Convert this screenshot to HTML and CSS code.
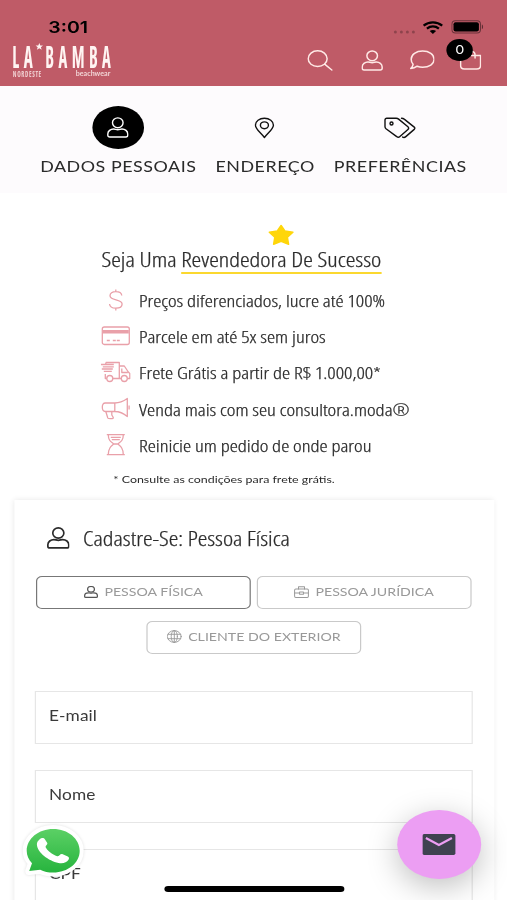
FILE: index.html
```html
<!DOCTYPE html>
<html lang="pt-BR">
<head>
<meta charset="utf-8">
<title>La Bamba Nordeste - Cadastro</title>
<link rel="stylesheet" href="styles.css">
</head>
<body>
<svg class="defs" aria-hidden="true">
  <symbol id="user" viewBox="0 0 22 21" preserveAspectRatio="none">
    <ellipse cx="11" cy="5.8" rx="5.3" ry="4.9"/>
    <path d="M1 18.3V17c0-3 2.800-5 5.800-5 1.600 0 2.300.7 4.200.7s2.600-.7 4.200-.7c3 0 5.800 2 5.800 5v1.300c0 .9-.8 1.700-1.900 1.700H2.900C1.800 20 1 19.200 1 18.300z"/>
  </symbol>
</svg>
<div class="screen">
  <header class="header">
    <div class="status">
      <span class="time">3:01</span>
      <svg class="dots" viewBox="0 0 24 4" preserveAspectRatio="none"><circle cx="3" cy="2" r="1.500"/><circle cx="9" cy="2" r="1.500"/><circle cx="15" cy="2" r="1.500"/><circle cx="21" cy="2" r="1.500"/></svg>
      <svg class="wifi" viewBox="0 0 21 13" preserveAspectRatio="none"><path d="M1.200 4.600C6.500.2 14.500.2 19.800 4.600M4.500 7.600c3.600-2.800 8.400-2.800 12 0" fill="none" stroke="#000" stroke-width="2.300"/><path d="M7.300 10c2-1.500 4.400-1.500 6.400 0l-3.200 2.900z"/></svg>
      <svg class="battery" viewBox="0 0 33 14" preserveAspectRatio="none"><rect x=".7" y=".7" width="28.600" height="12.300" rx="3.500" fill="none" stroke="#000" stroke-opacity=".45"/><rect x="2.300" y="2.300" width="25.400" height="9.100" rx="2"/><path d="M30.700 4.600c1.600.6 1.600 4 0 4.600z" opacity=".5"/></svg>
    </div>
    <nav class="nav">
      <svg class="logo" viewBox="0 0 102 36" preserveAspectRatio="none">
        <text class="logo-word" x="1.500" y="26" textLength="25" lengthAdjust="spacingAndGlyphs">LA</text>
        <path d="M28.500 1l1 2.400 2.700.1-2.100 1.700.8 2.600-2.400-1.500-2.400 1.500.8-2.600-2.100-1.700 2.700-.1z"/>
        <text class="logo-word" x="34.500" y="26" textLength="70" lengthAdjust="spacingAndGlyphs">BAMBA</text>
        <text class="logo-region" x="2" y="35" textLength="29" lengthAdjust="spacingAndGlyphs">NORDESTE</text>
        <text class="logo-tag" x="65" y="34" textLength="34.500" lengthAdjust="spacingAndGlyphs">beachwear</text>
      </svg>
      <svg class="ico ico-search" viewBox="0 0 26 21" preserveAspectRatio="none"><ellipse cx="10.500" cy="8.700" rx="9.500" ry="7.900"/><path d="M17.500 14.200l7.200 5.800"/></svg>
      <svg class="ico ico-user"><use href="#user"/></svg>
      <svg class="ico ico-chat" viewBox="0 0 26 20" preserveAspectRatio="none"><path d="M13.500 1C20 1 25 4.500 25 9.200s-5 8.100-11.500 8.100c-2 0-3.900-.4-5.500-1.100-1.800 1.500-4.200 2.300-6.500 2.300 1.300-1.200 2.200-2.600 2.400-4.200C2.600 12.900 2 11.200 2 9.200 2 4.500 7 1 13.500 1z"/></svg>
      <span class="cart">
        <svg class="ico ico-bag" viewBox="0 0 22 20" preserveAspectRatio="none"><path d="M1 5.500h20v10c0 2-1.500 3.500-3.800 3.500H4.800C2.500 19 1 17.500 1 15.500zM6.500 8V5c0-5 9-5 9 0v3"/></svg>
        <span class="badge">0</span>
      </span>
    </nav>
  </header>

  <ol class="steps">
    <li class="step step-active"><span class="step-icon"><svg class="ico ico-user"><use href="#user"/></svg></span>DADOS PESSOAIS</li>
    <li class="step"><span class="step-icon"><svg class="ico ico-pin" viewBox="0 0 20 22" preserveAspectRatio="none"><path d="M10 20.500C6.500 16 1 12 1 8.200 1 4.200 5 1.300 10 1.300s9 2.900 9 6.900c0 3.800-5.500 7.800-9 12.300z"/><ellipse cx="10" cy="8.300" rx="4" ry="3.400"/></svg></span>ENDEREÇO</li>
    <li class="step"><span class="step-icon"><svg class="ico ico-tags" viewBox="0 0 32 22" preserveAspectRatio="none"><path d="M1 3c0-1 .7-1.800 1.800-1.800h9.400c1 0 1.700.3 2.400.9l9.300 7.700c1 .9 1 1.800 0 2.600l-8 7.200c-1 .9-2.200.9-3.200 0L2 11.800c-.7-.6-1-1.200-1-2z"/><circle cx="7.500" cy="6.500" r="1.500"/><path d="M17.500 1.200c1.200 0 2 .3 2.700.9l10 8c.8.800.8 1.600 0 2.300l-8.400 7.200c-.9.800-2 1.100-3.200.5"/></svg></span>PREFERÊNCIAS</li>
  </ol>

  <section class="intro">
    <h1 class="title">Seja Uma <span class="highlight"><svg class="star" viewBox="0 0 27 22" preserveAspectRatio="none"><path d="M13.500 1.500L17.300 7 25.300 8.300 19.800 13.300 21 20.300 13.500 17.300 6 20.300 7.200 13.300 1.700 8.300 9.700 7z"/></svg>Revendedora De Sucesso</span></h1>
    <ul class="perks">
      <li><svg class="perk" viewBox="0 0 30 24" preserveAspectRatio="none"><path d="M15 1.500v2.400M15 20v2.500M21 7.500c-.3-2.500-2.800-3.900-6-3.900-3.500 0-5.800 1.600-5.800 4.100 0 5.200 12.100 3 12.100 8.300 0 2.600-2.700 4.200-6.300 4.200s-6-1.600-6.300-4.200"/></svg>Preços diferenciados, lucre até 100%</li>
      <li><svg class="perk" viewBox="0 0 30 24" preserveAspectRatio="none"><rect x="1.500" y="3" width="27" height="17.500" rx="2"/><path d="M2 7.800h26" stroke-width="3.400"/><path d="M6 16.500h4M12 16.500h7" stroke-width="1.500" stroke-dasharray="3 1"/></svg>Parcele em até 5x sem juros</li>
      <li><svg class="perk" viewBox="0 0 30 24" preserveAspectRatio="none"><path d="M5 2.500h13.500v16H12M5 2.500V4M0 4.500h13M2 6.800h11M1 9h11M3 11.300h8M4.500 14v4.500H6M18.500 6h5l4 6 1.500 1.500v5h-2.500M21 8.500v4h6M18.500 18.500h2"/><circle cx="9" cy="18.500" r="3"/><circle cx="23.500" cy="18.500" r="3"/></svg>Frete Grátis a partir de R$ 1.000,00*</li>
      <li><svg class="perk" viewBox="0 0 30 24" preserveAspectRatio="none"><path d="M14 6H4.500C2.500 6 1.500 7.500 1.500 10s1 4.500 3 4.500H14zM14 6c5 0 9-2 12.500-4.500v18C23 16.500 19 14.500 14 14.500M5 14.500L7 21c.3.800 6.500 1 5.500-.5L11 18v-3.500M28.300 8.500v4"/></svg>Venda mais com seu consultora.moda®</li>
      <li><svg class="perk" viewBox="0 0 30 24" preserveAspectRatio="none"><path d="M6 1.700h18M6 21.700h18M7.500 1.700c0 5.800 2.500 7 5.500 9.300-3 2.500-5.500 4.500-5.500 10.700M22.500 1.700c0 5.800-2.500 7-5.500 9.300 3 2.500 5.500 4.500 5.500 10.700M10 4.300h10M11 6.700h8M13 11h4"/></svg>Reinicie um pedido de onde parou</li>
    </ul>
    <p class="note">* Consulte as condições para frete grátis.</p>
  </section>

  <main class="card">
    <h2 class="card-title"><svg class="ico ico-user"><use href="#user"/></svg>Cadastre-Se: Pessoa Física</h2>
    <div class="types">
      <button class="type type-on"><svg class="ico ico-small"><use href="#user"/></svg>PESSOA FÍSICA</button>
      <button class="type"><svg class="ico ico-case" viewBox="0 0 15 12" preserveAspectRatio="none"><rect x=".6" y="3" width="13.800" height="8.400" rx="1.200"/><path d="M4.500 3V.7h6V3M.6 7h5M9.400 7h5M5.600 6h3.800v2.200H5.600z"/></svg>PESSOA JURÍDICA</button>
      <button class="type"><svg class="ico ico-globe" viewBox="0 0 15 13" preserveAspectRatio="none"><ellipse cx="7.500" cy="6.500" rx="6.900" ry="5.900"/><ellipse cx="7.500" cy="6.500" rx="3.100" ry="5.900"/><path d="M7.500.6v11.800M1.200 4.300h12.600M1.200 8.700h12.600"/></svg>CLIENTE DO EXTERIOR</button>
    </div>
    <div class="fields">
      <div class="field">E-mail</div>
      <div class="field">Nome</div>
      <div class="field">CPF</div>
    </div>
  </main>

  <svg class="whatsapp" viewBox="0 0 66 56" preserveAspectRatio="none">
    <defs><linearGradient id="green" x1="0" y1="0" x2="0" y2="1"><stop offset="0" stop-color="#5bd065"/><stop offset="1" stop-color="#27b43e"/></linearGradient></defs>
    <path class="wa-bubble" d="M34 5c14.700 0 26.500 9.700 26.500 21.800S48.700 48.600 34 48.600c-4.800 0-9.200-1-13-2.900L10 47l2.800-7.800C9.500 35.700 7.500 31.500 7.500 26.800 7.500 14.700 19.300 5 34 5z"/>
    <path d="M20.500 15.300c1.600-1.600 4.200-1.600 5.300.2l2.300 3.500c.7 1.300-1.900 2.600-1.800 4 1.600 3.500 6.700 7.600 11.700 9.300 1.800.3 3-2.800 5-2.200l5.600 2.400c1.600.8 1.400 2 .7 3.200-1.800 3-5.600 4-10 3.200C29.500 37 18 28.500 17.700 20.500c-.1-2.200 1.100-3.700 2.800-5.200z" fill="#fff"/>
  </svg>
  <button class="mail" aria-label="Contato"><svg viewBox="0 0 33 21" preserveAspectRatio="none"><rect width="33" height="21" rx="1.800" fill="#3f4250"/><path d="M3.500 4l13 7 13-7" fill="none" stroke="#ec9ef3" stroke-width="2.200"/></svg></button>
  <div class="home-bar"></div>
</div>
</body>
</html>
```
FILE: styles.css
```css
* { box-sizing: border-box; }
html, body { margin: 0; height: 900px; overflow: hidden; background: #fff; }
h1, h2, p, ol, ul { margin: 0; padding: 0; font-weight: inherit; list-style: none; }
button { padding: 0; font: inherit; color: inherit; background: none; }

/* The interface is a narrow layout widened horizontally to the window. */
.screen {
  position: relative;
  width: 422.5px;
  height: 900px;
  overflow: hidden;
  transform: scaleX(1.2);
  transform-origin: 0 0;
  font-family: Lato, "Liberation Sans", sans-serif;
  color: #2a2a2a;
  background: #fff;
}
svg { display: block; flex: none; }
.defs { position: absolute; width: 0; height: 0; }

.header { height: 85.5px; background: #bf5b67; }
.status { display: flex; align-items: center; height: 42px; padding: 12px 19.5px 0 40.2px; }
.time { margin-right: auto; font: 600 16.3px Inter, sans-serif; color: #000; }
.dots { width: 20px; height: 4px; margin: 9px 5px 0 0; opacity: .25; }
.wifi { width: 17.5px; height: 13px; margin-right: 6px; }
.battery { width: 27.5px; height: 14px; }

.nav { display: flex; align-items: center; height: 36px; padding: 0 21.3px 0 9.2px; }
.logo { width: 85px; height: 36px; margin-right: auto; fill: #fff4f2; overflow: visible; }
.logo-word { font: 700 30px "Open Sans", sans-serif; font-stretch: 75%; letter-spacing: 8px; }
.logo-region { font: 700 9px "Open Sans", sans-serif; font-stretch: 75%; letter-spacing: 1px; opacity: .75; }
.logo-tag { font: 700 7px Lato, sans-serif; opacity: .8; }

.ico { fill: none; stroke: currentColor; stroke-width: 1.5; stroke-linejoin: round; stroke-linecap: round; }
.ico-user { width: 18.3px; height: 21px; }
.nav .ico { color: #ffe9e6; }
.ico-search { width: 21.6px; height: 21px; margin-right: 23.9px; }
.nav .ico-user { margin-right: 20.8px; }
.ico-chat { width: 21.6px; height: 20px; margin: -1px 20.8px 0 0; }
.cart { position: relative; }
.ico-bag { width: 18.3px; height: 20px; }
.badge {
  position: absolute; left: -10.5px; top: -11px;
  width: 21.7px; height: 21.5px; border-radius: 50%;
  background: #000; color: #fff; text-align: center;
  font: 400 12px/21.5px Inter, sans-serif;
}

.steps { display: flex; justify-content: center; gap: 15.8px; height: 107px; padding-top: 20.5px; background: #fdfbfd; }
.step { display: flex; flex-direction: column; align-items: center; font-size: 14.9px; line-height: 20px; letter-spacing: .45px; white-space: nowrap; }
.step-icon { display: flex; align-items: center; justify-content: center; width: 43.3px; height: 43px; margin: 0 0 6.5px -.8px; border-radius: 50%; color: #111; }
.step-active .step-icon { margin-left: 0; background: #000; color: #fff; }
.ico-pin { width: 16.7px; height: 22px; }
.ico-tags { width: 26.7px; height: 22px; }
.steps .ico { stroke-width: 1.4; }

.intro, .card-title { font-family: "Open Sans", sans-serif; font-stretch: 75%; font-weight: 300; -webkit-text-stroke: .25px currentColor; }
.intro { padding: 31px 0 0 84.5px; }
.title { display: flex; align-items: last baseline; padding-top: 1px; font-size: 20.4px; line-height: 26px; white-space: pre; }
.highlight { display: flex; flex-direction: column; align-items: center; border-bottom: 2px solid #fbd82f; }
.star { width: 22.5px; height: 22px; margin-top: -1px; fill: #ffd60a; stroke: #ffd60a; stroke-width: 1.5; stroke-linejoin: round; }
.perks { padding-top: 9px; }
.perks li { display: flex; align-items: center; height: 36.2px; font-size: 17.15px; white-space: nowrap; }
.perk { width: 25px; height: 24px; margin: -1px 7.1px 0 -.8px; fill: none; stroke: #e9a0a9; stroke-width: 1.3; stroke-linejoin: round; }
.note { padding: 7.5px 0 0 9.9px; font: 400 10.35px/16px Lato, sans-serif; -webkit-text-stroke: 0; }

.card { width: 400px; height: 500px; margin: 13px 0 0 11.6px; padding: 23.5px 17.2px 0; box-shadow: 0 0 5px rgba(0, 0, 0, .1); background: #fff; }
.card-title { display: flex; align-items: center; gap: 11.5px; height: 29px; padding-left: 9.8px; font-size: 20.25px; }
.card-title .ico { width: 19.2px; height: 22px; stroke-width: 1.6; }
.types { display: flex; flex-wrap: wrap; justify-content: center; gap: 12px 5px; margin-top: 23.5px; }
.type { display: flex; align-items: center; justify-content: center; gap: 5px; width: 178.75px; height: 33px; padding-bottom: 1px; border: 1px solid #c9c9c9; border-radius: 5px; font-size: 11.8px; color: #999; }
.type-on { border-color: #777; }
.ico-small { width: 11.7px; height: 12px; color: #555; stroke-width: 2; }
.ico-case { width: 12.5px; height: 12px; stroke-width: 1; }
.ico-globe { width: 12.5px; height: 13px; stroke-width: .9; }
.fields { display: grid; gap: 26px; margin-top: 37.2px; }
.field { height: 53px; padding: 0 11px; border: 1px solid #e6e6e6; font-size: 14.4px; line-height: 48px; color: #3a3a3a; letter-spacing: .1px; }

.whatsapp { position: absolute; left: 16.3px; top: 824px; width: 55px; height: 56px; overflow: visible; }
.wa-bubble { fill: url(#green); stroke: #fff; stroke-width: 8; stroke-linejoin: round; paint-order: stroke; filter: drop-shadow(0 0 1.5px rgba(0, 0, 0, .12)); }
.mail { position: absolute; left: 330.8px; top: 809.5px; display: flex; align-items: center; justify-content: center; width: 70px; height: 69.5px; border: 0; border-radius: 50%; background: #ec9ef3; box-shadow: 0 8px 28px rgba(0, 0, 0, .25); }
.mail svg { width: 27.5px; height: 21px; }
.home-bar { position: absolute; left: 136.7px; top: 886px; width: 150px; height: 5.5px; border-radius: 3px; background: #000; }
```
